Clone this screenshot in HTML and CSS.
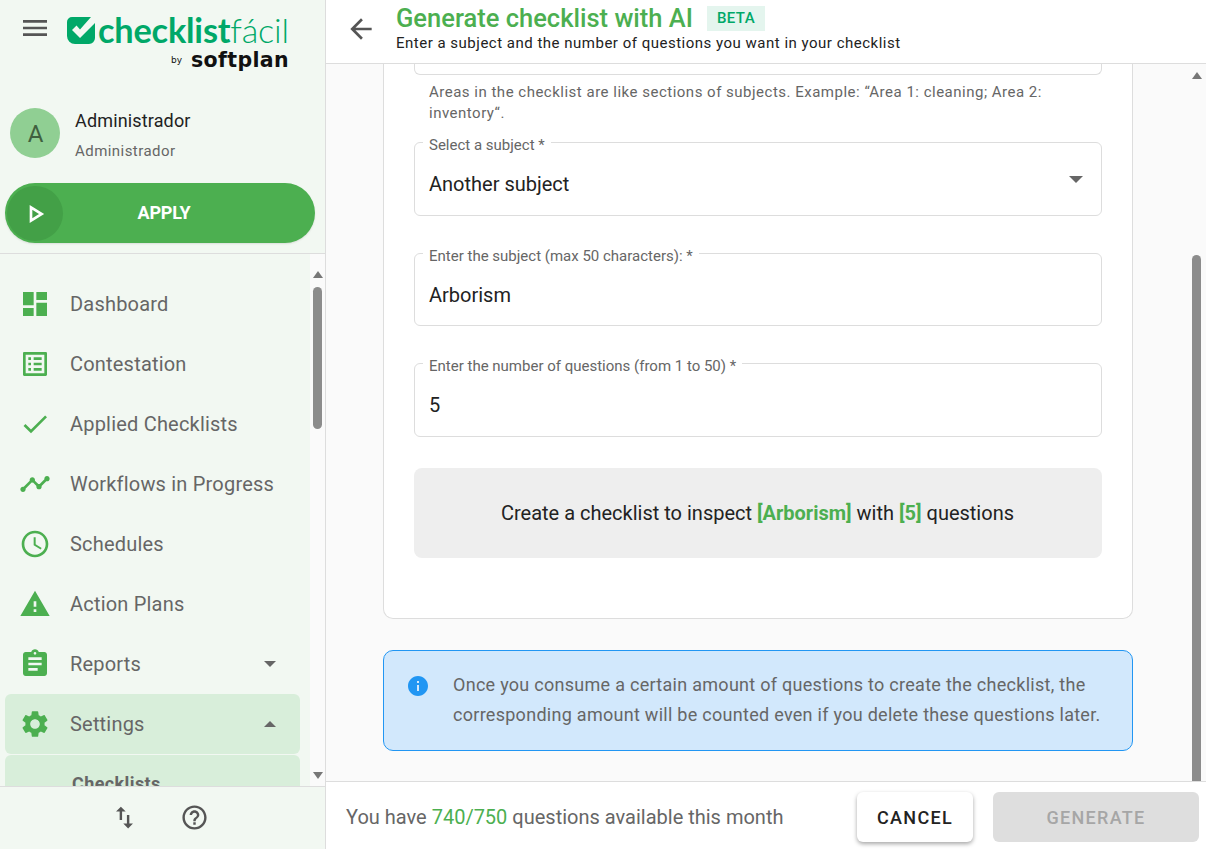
FILE: index.html
```html
<!DOCTYPE html>
<html lang="en">
<head>
<meta charset="utf-8">
<title>Generate checklist with AI</title>
<link rel="stylesheet" href="styles.css">
</head>
<body>
<div class="app">
  <aside class="sidebar">
    <div class="side-top">
      <div class="brand-row">
        <svg class="menu-icon" viewBox="0 0 24 24"><path d="M3 18h18v-2H3v2zm0-5h18v-2H3v2zm0-7v2h18V6H3z"/></svg>
        <div class="brand">
          <div class="logo">
            <svg class="logo-mark" viewBox="0 0 28 27"><path d="M5 0H24L13 12.500 9.500 8.500 5 13l8 8L28 6V21a6 6 0 0 1-6 6H8a8 8 0 0 1-8-8V5a5 5 0 0 1 5-5z"/></svg>
            <span class="logo-text"><b>checklist</b>fácil</span>
          </div>
          <div class="byline"><span class="by">by</span><span class="softplan">softplan</span></div>
        </div>
      </div>
      <div class="user">
        <div class="avatar">A</div>
        <div class="user-text">
          <div class="user-name">Administrador</div>
          <div class="user-role">Administrador</div>
        </div>
      </div>
      <div class="apply">
        <span class="apply-knob"><svg viewBox="0 0 24 24"><path d="M9 7v10l8-5z"/></svg></span>
        <span class="apply-label">APPLY</span>
      </div>
    </div>
    <nav class="nav">
      <div class="nav-item"><svg class="nav-icon" viewBox="0 0 24 24"><path d="M3 13h8V3H3v10zm0 8h8v-6H3v6zm10 0h8V11h-8v10zm0-18v6h8V3h-8z"/></svg><span>Dashboard</span></div>
      <div class="nav-item"><svg class="nav-icon" viewBox="0 0 24 24"><path d="M19 5v14H5V5h14m1.100-2H3.900c-.5 0-.9.4-.9.9v16.200c0 .4.4.9.9.9h16.200c.4 0 .9-.5.9-.9V3.900c0-.5-.5-.9-.9-.9zM11 7h6v2h-6V7zm0 4h6v2h-6v-2zm0 4h6v2h-6zM7 7h2v2H7zm0 4h2v2H7zm0 4h2v2H7z"/></svg><span>Contestation</span></div>
      <div class="nav-item"><svg class="nav-icon" viewBox="0 0 24 24"><path d="M9 16.170L4.830 12l-1.420 1.410L9 19 21 7l-1.410-1.410z"/></svg><span>Applied Checklists</span></div>
      <div class="nav-item"><svg class="nav-icon" viewBox="0 0 24 24"><path d="M23 8c0 1.100-.9 2-2 2-.18 0-.35-.02-.51-.07l-3.560 3.550c.05.16.07.34.07.52 0 1.100-.9 2-2 2s-2-.9-2-2c0-.18.02-.36.07-.52l-2.550-2.550c-.16.05-.34.07-.52.07s-.36-.02-.52-.07l-4.550 4.560c.05.16.07.33.07.51 0 1.100-.9 2-2 2s-2-.9-2-2 .9-2 2-2c.18 0 .35.02.51.07l4.560-4.550C8.020 9.360 8 9.180 8 9c0-1.100.9-2 2-2s2 .9 2 2c0 .18-.02.36-.07.52l2.550 2.550c.16-.05.34-.07.52-.07s.36.02.52.07l3.550-3.560C19.020 8.350 19 8.180 19 8c0-1.100.9-2 2-2s2 .9 2 2z"/></svg><span>Workflows in Progress</span></div>
      <div class="nav-item"><svg class="nav-icon" viewBox="0 0 24 24"><path d="M11.990 2C6.470 2 2 6.480 2 12s4.470 10 9.990 10C17.520 22 22 17.520 22 12S17.520 2 11.990 2zM12 20c-4.420 0-8-3.580-8-8s3.580-8 8-8 8 3.580 8 8-3.580 8-8 8zm.5-13H11v6l5.250 3.150.75-1.230-4.500-2.670z"/></svg><span>Schedules</span></div>
      <div class="nav-item"><svg class="nav-icon" viewBox="0 0 24 24"><path d="M1 21h22L12 2 1 21zm12-3h-2v-2h2v2zm0-4h-2v-4h2v4z"/></svg><span>Action Plans</span></div>
      <div class="nav-item"><svg class="nav-icon" viewBox="0 0 24 24"><path d="M19 3h-4.180C14.400 1.840 13.300 1 12 1c-1.300 0-2.400.84-2.820 2H5c-1.100 0-2 .9-2 2v14c0 1.100.9 2 2 2h14c1.100 0 2-.9 2-2V5c0-1.100-.9-2-2-2zm-7 0c.55 0 1 .45 1 1s-.45 1-1 1-1-.45-1-1 .45-1 1-1zm2 14H7v-2h7v2zm3-4H7v-2h10v2zm0-4H7V7h10v2z"/></svg><span>Reports</span><i class="caret caret-down"></i></div>
      <div class="nav-item active"><svg class="nav-icon" viewBox="0 0 24 24"><path d="M19.140 12.940c.04-.3.06-.61.06-.94 0-.32-.02-.64-.07-.94l2.030-1.580c.18-.14.23-.41.12-.61l-1.920-3.320c-.12-.22-.37-.29-.59-.22l-2.390.96c-.5-.38-1.030-.7-1.620-.94l-.36-2.540c-.04-.24-.24-.41-.48-.41h-3.840c-.24 0-.43.17-.47.41l-.36 2.540c-.59.24-1.130.57-1.620.94l-2.390-.96c-.22-.08-.47 0-.59.22L2.740 8.870c-.12.21-.08.47.12.61l2.030 1.580c-.05.3-.09.63-.09.94s.02.64.07.94l-2.030 1.580c-.18.14-.23.41-.12.61l1.920 3.320c.12.22.37.29.59.22l2.390-.96c.5.38 1.030.7 1.620.94l.36 2.540c.05.24.24.41.48.41h3.840c.24 0 .44-.17.47-.41l.36-2.540c.59-.24 1.130-.56 1.620-.94l2.390.96c.22.08.47 0 .59-.22l1.920-3.320c.12-.22.07-.47-.12-.61l-2.010-1.580zM12 15.600c-1.980 0-3.600-1.620-3.600-3.600s1.620-3.600 3.600-3.600 3.600 1.620 3.600 3.600-1.620 3.600-3.600 3.600z"/></svg><span>Settings</span><i class="caret caret-up"></i></div>
      <div class="nav-sub"><span>Checklists</span></div>
      <div class="scroll side-scroll">
        <i class="arrow arrow-up"></i>
        <div class="thumb side-thumb"></div>
        <i class="arrow arrow-down"></i>
      </div>
    </nav>
    <div class="side-foot">
      <svg viewBox="0 0 24 24"><path d="M16 17.010V10h-2v7.010h-3L15 21l4-3.990h-3zM9 3L5 6.990h3V14h2V6.990h3L9 3z"/></svg>
      <svg viewBox="0 0 24 24"><path d="M11 18h2v-2h-2v2zm1-16C6.480 2 2 6.480 2 12s4.480 10 10 10 10-4.480 10-10S17.520 2 12 2zm0 18c-4.410 0-8-3.590-8-8s3.590-8 8-8 8 3.590 8 8-3.590 8-8 8zm0-14c-2.210 0-4 1.790-4 4h2c0-1.100.9-2 2-2s2 .9 2 2c0 2-3 1.750-3 5h2c0-2.250 3-2.500 3-5 0-2.210-1.790-4-4-4z"/></svg>
    </div>
  </aside>
  <main class="main">
    <header class="head">
      <svg class="back" viewBox="0 0 24 24"><path d="M20 11H7.830l5.590-5.590L12 4l-8 8 8 8 1.410-1.410L7.830 13H20v-2z"/></svg>
      <div class="head-text">
        <div class="title-row"><h1>Generate checklist with AI</h1><span class="beta">BETA</span></div>
        <p>Enter a subject and the number of questions you want in your checklist</p>
      </div>
    </header>
    <section class="body">
      <div class="content">
        <div class="card">
          <div class="field clipped"></div>
          <p class="hint">Areas in the checklist are like sections of subjects. Example: “Area 1: cleaning; Area 2: inventory“.</p>
          <div class="field first"><label>Select a subject *</label><span>Another subject</span><i class="caret caret-select"></i></div>
          <div class="field"><label>Enter the subject (max 50 characters): *</label><span>Arborism</span></div>
          <div class="field"><label>Enter the number of questions (from 1 to 50) *</label><span>5</span></div>
          <div class="preview">Create a checklist to inspect <b>[Arborism]</b> with <b>[5]</b> questions</div>
        </div>
        <div class="notice">
          <svg viewBox="0 0 24 24"><path d="M12 2C6.480 2 2 6.480 2 12s4.480 10 10 10 10-4.480 10-10S17.520 2 12 2zm1 15h-2v-6h2v6zm0-8h-2V7h2v2z"/></svg>
          <p>Once you consume a certain amount of questions to create the checklist, the corresponding amount will be counted even if you delete these questions later.</p>
        </div>
      </div>
      <div class="scroll main-scroll">
        <i class="arrow arrow-up"></i>
        <div class="thumb main-thumb"></div>
      </div>
    </section>
    <footer class="foot">
      <p>You have <em>740/750</em> questions available this month</p>
      <button class="btn cancel">CANCEL</button>
      <button class="btn generate">GENERATE</button>
    </footer>
  </main>
</div>
</body>
</html>
```
FILE: styles.css
```css
* { box-sizing: border-box; }
html, body { margin: 0; height: 100%; overflow: hidden; }
body { font-family: Roboto, sans-serif; color: #666; background: #fff; }
.app { display: flex; height: 849px; width: 1206px; }

.sidebar { width: 326px; flex: none; display: flex; flex-direction: column; background: #f2f8f2; border-right: 1px solid #ddd; }
.side-top { height: 254px; flex: none; border-bottom: 1px solid #ddd; padding: 0 10px 0 5px; display: flex; flex-direction: column; }
.brand-row { display: flex; height: 108px; flex: none; padding: 12px 0 0 14px; }
.menu-icon { width: 32px; height: 32px; fill: #555; flex: none; }
.brand { margin-left: 16px; width: 222px; }
.logo { display: flex; align-items: center; height: 28px; margin-top: 4px; }
.logo-mark { width: 28px; height: 27px; fill: #00a868; flex: none; }
.logo-text { font-family: Lato, sans-serif; font-size: 34.300px; line-height: 28px; color: #00a868; font-weight: 300; margin-left: 3px; letter-spacing: -.2px; }
.logo-text b { font-weight: 700; }
.byline { display: flex; justify-content: flex-end; align-items: center; height: 24px; margin-top: 4px; color: #111; }
.by { font-size: 9px; margin-right: 9px; font-family: "DejaVu Sans", sans-serif; }
.softplan { font-family: "DejaVu Sans", sans-serif; font-weight: 700; font-size: 20.500px; line-height: 20px; letter-spacing: .35px; }
.user { display: flex; height: 75px; flex: none; padding-left: 5px; }
.avatar { width: 50px; height: 50px; border-radius: 50%; background: #90cf93; color: #40603f; font-size: 24px; padding: 1px 0 0 1px; display: flex; align-items: center; justify-content: center; flex: none; }
.user-text { margin-left: 15px; padding-top: 1px; }
.user-name { font-size: 18px; line-height: 24px; color: #222; letter-spacing: .15px; }
.user-role { font-size: 15px; line-height: 20px; margin-top: 8px; letter-spacing: .45px; color: #666; }
.apply { height: 60px; width: 310px; border-radius: 30px; background: #4caf50; display: flex; align-items: center; position: relative; box-shadow: 0 1px 2px rgba(0,0,0,.1); }
.apply-knob { position: absolute; left: 2px; top: 3px; width: 56px; height: 55px; border-radius: 50%; background: #43a047; display: flex; align-items: center; justify-content: center; }
.apply-knob svg { width: 32px; height: 32px; fill: none; stroke: #fff; stroke-width: 2; }
.apply-label { flex: 1; text-align: center; color: #fff; font-weight: 700; font-size: 18px; padding: 0 0 2px 8px; letter-spacing: -.2px; }

.nav { flex: 1; min-height: 0; overflow: hidden; position: relative; padding: 20px 25px 0 5px; background: #f2f8f2; }
.nav-item { height: 60px; display: flex; align-items: center; font-size: 20px; color: #666; padding-left: 14px; letter-spacing: .2px; }
.nav-item span { flex: 1; margin-left: 19px; }
.nav-icon { width: 32px; height: 32px; fill: #4caf50; flex: none; }
.nav-item.active, .nav-sub { background: #d8eeda; border-radius: 6px; }
.nav-sub { margin-top: 1px; height: 60px; display: flex; align-items: center; padding: 0 0 3px 67px; font-size: 18px; font-weight: 700; color: #666; letter-spacing: .4px; }
.caret { display: block; width: 0; height: 0; border-left: 6.500px solid transparent; border-right: 6.500px solid transparent; flex: none; }
.caret-down { border-top: 6.500px solid #666; margin-right: 24px; }
.caret-up { border-bottom: 6.500px solid #666; margin-right: 24px; }

.side-foot { height: 63px; flex: none; border-top: 1px solid #ddd; display: flex; align-items: center; padding: 0 0 2px 110px; gap: 41px; }
.side-foot svg { width: 29px; height: 29px; fill: #555; }

.scroll { position: absolute; top: 0; background: #fafafa; width: 15px; display: flex; flex-direction: column; align-items: center; }
.side-scroll { right: 0; height: 100%; padding-top: 17px; }
.main-scroll { right: 2px; height: 100%; padding-top: 8px; background: #fafafa; }
.thumb { width: 9px; background: #8c8c8c; border-radius: 4.500px; flex: none; }
.side-thumb { height: 142px; margin-top: 9px; }
.main-thumb { height: 540px; margin-top: 176px; border-radius: 4.500px 4.500px 0 0; }
.arrow { display: block; width: 0; height: 0; border-left: 5px solid transparent; border-right: 5px solid transparent; flex: none; }
.arrow-up { border-bottom: 7px solid #777; }
.arrow-down { border-top: 7px solid #777; margin-top: auto; margin-bottom: 7px; }

.main { flex: 1; min-width: 0; display: flex; flex-direction: column; }
.head { height: 64px; flex: none; border-bottom: 1px solid #ddd; display: flex; padding: 6px 0 0 19px; background: #fff; }
.back { width: 32px; height: 32px; fill: #555; margin-top: 7px; flex: none; }
.head-text { margin-left: 19px; }
.title-row { display: flex; align-items: center; height: 25px; }
h1 { margin: 0; font-size: 25.500px; font-weight: 500; color: #4caf50; line-height: 25px; }
.beta { margin-left: 14px; background: #e4f5ee; color: #00a868; font-size: 15px; font-weight: 500; padding: 0 10px; height: 25px; line-height: 25px; letter-spacing: .4px; }
.head-text p { margin: 3px 0 0; font-size: 15px; line-height: 18px; color: #222; letter-spacing: .5px; }

.body { flex: 1; min-height: 0; position: relative; overflow: hidden; background: #fafafa; }
.content { padding: 0 0 0 57px; width: 807px; }
.card { background: #fff; border: 1px solid #ddd; border-top: 0; border-radius: 0 0 10px 10px; height: 555px; padding: 0 30px; }
.field { height: 73.600px; border: 1px solid #ddd; border-radius: 6px; position: relative; margin-top: 37px; display: flex; align-items: center; padding: 11px 14px 0; font-size: 20px; color: #222; }
.field.clipped { height: 11px; margin-top: 0; padding: 0; border-top: 0; border-radius: 0 0 6px 6px; }
.field.first { margin-top: 0; }
.field label { position: absolute; left: 8px; top: -8px; padding: 0 6px; background: #fff; font-size: 15px; line-height: 20px; color: #666; }
.field span { flex: 1; }
.caret-select { border-left-width: 7px; border-right-width: 7px; border-top: 7px solid #666; margin-right: 4px; margin-top: -10px; }
.hint { margin: 7px 15px 18px; font-size: 15px; line-height: 21px; letter-spacing: .5px; color: #666; }
.preview { height: 90px; margin-top: 31px; padding-right: 1px; background: #eee; border-radius: 8px; font-size: 20px; color: #222; line-height: 90px; text-align: center; }
.preview b { color: #4caf50; font-weight: 700; }
.notice { margin-top: 31px; height: 101px; border: 1px solid #2196f3; border-radius: 10px; background: #d2e8fc; display: flex; padding: 19px 0 0 22px; }
.notice svg { width: 24px; height: 24px; fill: #2196f3; flex: none; margin-top: 4px; }
.notice p { margin: 0 0 0 23px; font-size: 18px; line-height: 30px; color: #666; letter-spacing: .28px; width: 665px; }

.foot { height: 68px; flex: none; border-top: 1px solid #ddd; background: #fff; display: flex; align-items: center; padding: 3px 7px 0 20px; }
.foot p { margin: 0; flex: 1; font-size: 20px; color: #666; }
.foot em { font-style: normal; color: #4caf50; }
.btn { height: 50px; border: 0; border-radius: 6px; font-family: Roboto, sans-serif; font-size: 18px; font-weight: 500; letter-spacing: 1.300px; }
.cancel { width: 116px; background: #fff; color: #222; box-shadow: 0 2px 4px rgba(0,0,0,.35); }
.generate { width: 206px; margin-left: 20px; background: #dedede; color: #a6a6a6; }
```
